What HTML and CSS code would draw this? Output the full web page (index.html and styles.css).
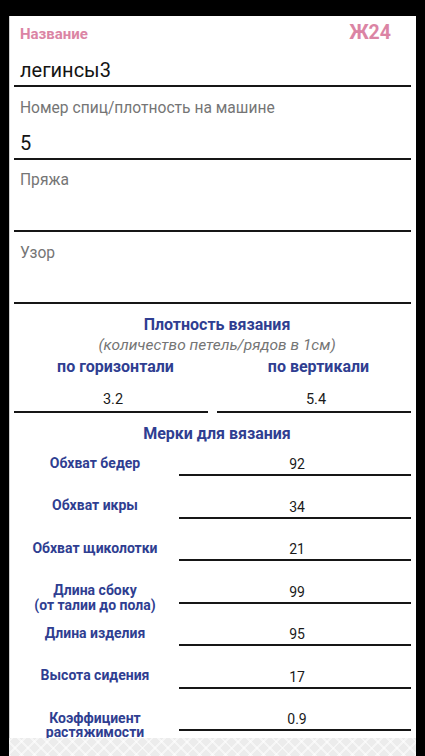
FILE: index.html
```html
<!DOCTYPE html>
<html lang="ru">
<head>
<meta charset="utf-8">
<title>Ж24</title>
<link rel="stylesheet" href="styles.css">
</head>
<body>
<div class="phone">
  <div class="card">
    <div class="head"><span class="title">Название</span><span class="code">Ж24</span></div>
    <div class="input name">легинсы3</div>
    <div class="flabel">Номер спиц/плотность на машине</div>
    <div class="input num">5</div>
    <div class="area yarn"><span>Пряжа</span></div>
    <div class="area pattern"><span>Узор</span></div>
    <div class="sect-title dens-title">Плотность вязания</div>
    <div class="hint">(количество петель/рядов в 1см)</div>
    <div class="dens">
      <div class="dcol"><div class="dhead">по горизонтали</div><div class="dval">3.2</div></div>
      <div class="dcol"><div class="dhead">по вертикали</div><div class="dval">5.4</div></div>
    </div>
    <div class="sect-title meas-title">Мерки для вязания</div>
    <div class="rows">
      <div class="row"><div class="rlabel">Обхват бедер</div><div class="rval">92</div></div>
      <div class="row"><div class="rlabel">Обхват икры</div><div class="rval">34</div></div>
      <div class="row"><div class="rlabel">Обхват щиколотки</div><div class="rval">21</div></div>
      <div class="row"><div class="rlabel">Длина сбоку<br>(от талии до пола)</div><div class="rval">99</div></div>
      <div class="row"><div class="rlabel">Длина изделия</div><div class="rval">95</div></div>
      <div class="row"><div class="rlabel">Высота сидения</div><div class="rval">17</div></div>
      <div class="row"><div class="rlabel">Коэффициент<br>растяжимости</div><div class="rval">0.9</div></div>
    </div>
  </div>
  <div class="strip"></div>
</div>
</body>
</html>
```
FILE: styles.css
```css
* { box-sizing: border-box; }
html, body { margin: 0; padding: 0; background: #000; }
body {
  font-family: Roboto, "Noto Sans", "Liberation Sans", sans-serif;
  width: 425px;
  height: 756px;
  overflow: hidden;
}
.phone {
  margin-left: 9px;
  padding-top: 16px;
  width: 407px;
}
.card {
  background: #fff;
  height: 722px;
  overflow: hidden;
  padding: 0 5px 0 4px;
  border-left: 1px solid #cfcfcf;
}
.head {
  display: flex;
  justify-content: space-between;
  align-items: baseline;
  height: 29px;
  padding: 5px 20px 0 6px;
  line-height: 24px;
  color: #db84a4;
  font-weight: 700;
}
.title { font-size: 15px; }
.code { font-size: 19.5px; }
.input {
  font-size: 20px;
  color: #141414;
  padding-left: 6px;
  border-bottom: 2px solid #161616;
}
.name { height: 42px; padding-top: 11px; line-height: 28px; }
.num { height: 42px; padding-top: 10px; line-height: 30px; }
.flabel {
  font-size: 15.6px;
  color: #757575;
  padding: 11px 0 0 6px;
  line-height: 20px;
  height: 31px;
}
.area {
  height: 72px;
  font-size: 15.6px;
  color: #757575;
  line-height: 20px;
  padding-left: 6px;
  border-bottom: 2px solid #161616;
}
.yarn { padding-top: 10px; }
.pattern { padding-top: 11px; }
.sect-title {
  text-align: center;
  color: #2f3e91;
  font-weight: 700;
  font-size: 16px;
  line-height: 20px;
  padding-left: 9px;
}
.dens-title { margin-top: 11px; }
.meas-title { margin-top: 11px; }
.hint {
  text-align: center;
  font-style: italic;
  color: #757575;
  font-size: 15.5px;
  line-height: 20px;
  padding-left: 9px;
}
.dens {
  display: grid;
  grid-template-columns: 1fr 1fr;
  column-gap: 9px;
}
.dhead {
  text-align: center;
  color: #2f3e91;
  font-weight: 700;
  font-size: 16px;
  line-height: 24px;
  padding-left: 9px;
}
.dval {
  text-align: center;
  font-size: 14.5px;
  color: #1a1a1a;
  line-height: 18px;
  padding: 12px 0 2px 4px;
  border-bottom: 2px solid #161616;
}
.rows {
  display: flex;
  flex-direction: column;
  gap: 11.5px;
  margin-top: 1.4px;
}
.row {
  display: grid;
  grid-template-columns: 165px 1fr;
  height: 31px;
}
.rlabel {
  text-align: center;
  color: #2f3e91;
  font-weight: 700;
  font-size: 14px;
  line-height: 14.5px;
  padding: 10.5px 3px 0 0;
  white-space: nowrap;
}
.rval {
  text-align: center;
  font-size: 14px;
  color: #1a1a1a;
  line-height: 16px;
  padding: 11px 0 2px 4px;
  border-bottom: 2px solid #161616;
  height: 31px;
}
.strip {
  height: 18px;
  background-color: #ececec;
  background-image:
    repeating-linear-gradient(45deg, rgba(255,255,255,0.55) 0 2px, transparent 2px 9px),
    repeating-linear-gradient(-45deg, rgba(255,255,255,0.55) 0 2px, transparent 2px 9px);
}
```
